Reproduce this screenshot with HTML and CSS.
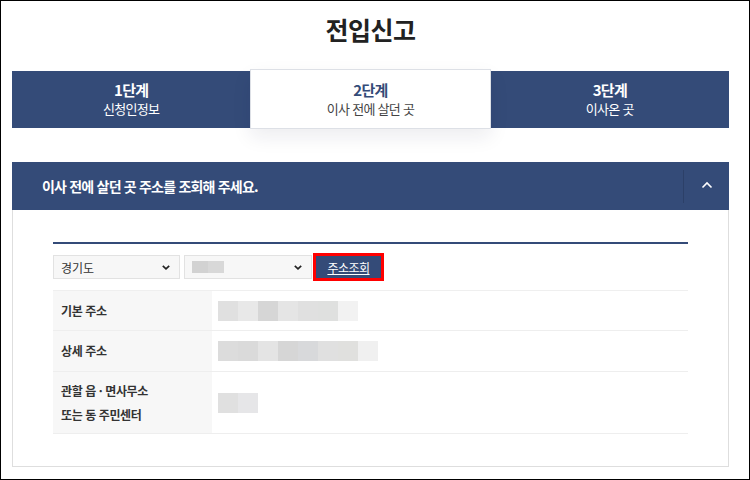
FILE: index.html
```html
<!DOCTYPE html>
<html lang="ko">
<head>
<meta charset="utf-8">
<link rel="stylesheet" href="styles.css">
</head>
<body>
<div class="frame">
  <h1 class="title">전입신고</h1>
  <div class="steps">
    <div class="step"><strong>1단계</strong><span>신청인정보</span></div>
    <div class="step active"><strong>2단계</strong><span>이사 전에 살던 곳</span></div>
    <div class="step"><strong>3단계</strong><span>이사온 곳</span></div>
  </div>
  <section class="panel">
    <div class="panel-head">
      <h2>이사 전에 살던 곳 주소를 조회해 주세요.</h2>
      <button class="toggle" type="button" aria-label="접기">
        <svg width="12" height="8" viewBox="0 0 12 8"><polyline points="1.5,6.5 6,2 10.5,6.5" fill="none" stroke="#fff" stroke-width="1.6"/></svg>
      </button>
    </div>
    <div class="panel-body">
      <div class="search">
        <div class="select"><span>경기도</span><svg class="caret" width="8" height="5" viewBox="0 0 8 5"><polyline points="0.8,0.8 4,3.8 7.2,0.8" fill="none" stroke="#222" stroke-width="1.7"/></svg></div>
        <div class="select"><span class="blur"><i class="g1"></i><i class="g2"></i></span><svg class="caret" width="8" height="5" viewBox="0 0 8 5"><polyline points="0.8,0.8 4,3.8 7.2,0.8" fill="none" stroke="#222" stroke-width="1.7"/></svg></div>
        <button class="search-btn" type="button">주소조회</button>
      </div>
      <div class="info">
        <div class="row">
          <div class="label">기본 주소</div>
          <div class="value"><span class="blur"><i class="a1"></i><i class="a2"></i><i class="a3"></i><i class="a4"></i><i class="a5"></i><i class="a6"></i><i class="a7"></i></span></div>
        </div>
        <div class="row">
          <div class="label">상세 주소</div>
          <div class="value"><span class="blur"><i class="b1"></i><i class="b2"></i><i class="b3"></i><i class="b4"></i><i class="b5"></i><i class="b6"></i><i class="b7"></i><i class="b8"></i></span></div>
        </div>
        <div class="row tall">
          <div class="label">관할 읍 · 면사무소<br>또는 동 주민센터</div>
          <div class="value"><span class="blur"><i class="c1"></i><i class="c2"></i></span></div>
        </div>
      </div>
    </div>
  </section>
</div>
</body>
</html>
```

FILE: styles.css
```css
* { box-sizing: border-box; }
html, body { margin: 0; padding: 0; background: #fff; }
body { font-family: "Noto Sans CJK KR", "Noto Sans", sans-serif; color: #333; }

.frame {
  width: 750px;
  height: 480px;
  border: 1px solid #000;
  padding: 0 20px 0 11px;
  overflow: hidden;
}

.title {
  margin: 0;
  padding-top: 11px;
  height: 68px;
  font-size: 25px;
  line-height: 34px;
  font-weight: 700;
  color: #222;
  text-align: center;
  letter-spacing: -0.5px;
}

.steps {
  display: flex;
  align-items: center;
  height: 60px;
}
.step {
  flex: 1;
  height: 57px;
  background: #344b78;
  color: #fff;
  display: flex;
  flex-direction: column;
  align-items: center;
  justify-content: center;
  letter-spacing: -0.7px;
}
.step strong { font-size: 15px; line-height: 20px; font-weight: 700; }
.step span { font-size: 13px; line-height: 18px; font-weight: 400; }
.step.active {
  height: 60px;
  background: #fff;
  color: #344b78;
  border: 1px solid #dde0e6;
  box-shadow: 0 8px 18px rgba(20, 30, 60, 0.08);
  position: relative;
  z-index: 1;
}
.step.active span { color: #444; }

.panel { margin-top: 33px; }
.panel-head {
  height: 48px;
  background: #344b78;
  display: flex;
  align-items: center;
  justify-content: space-between;
}
.panel-head h2 {
  margin: 0 0 0 30px;
  font-size: 14px;
  font-weight: 700;
  color: #fff;
  letter-spacing: -0.8px;
}
.toggle {
  width: 46px;
  height: 33px;
  border: 0;
  border-left: 1px solid #2c4068;
  background: transparent;
  display: flex;
  align-items: center;
  justify-content: center;
  padding: 0 0 2px 0;
}

.panel-body {
  height: 257px;
  border: 1px solid #dedede;
  border-top: 0;
  padding: 32px 40px 0 40px;
}

.search {
  border-top: 2px solid #344b78;
  padding-top: 10px;
  display: flex;
  align-items: center;
  gap: 4px;
  height: 38px;
}
.select {
  width: 127px;
  height: 24px;
  border: 1px solid #e2e2e2;
  background: #f7f7f7;
  display: flex;
  align-items: center;
  justify-content: space-between;
  padding: 0 9px 0 7px;
  font-size: 12px;
  color: #333;
}
.select + .select { width: 128px; }
.search-btn {
  margin-left: -3px;
  width: 71px;
  height: 28px;
  border: 3px solid #f00;
  background: #344b78;
  color: #fff;
  font-family: inherit;
  font-size: 12px;
  text-decoration: underline;
  padding: 0;
  letter-spacing: -0.5px;
}

.blur { display: flex; }
.blur i { display: block; width: 20px; height: 20px; }
.select .blur i { width: 16px; height: 12px; }
.g1 { background: #d2d2d2; }
.g2 { background: #d8d8d8; }

.info { margin-top: 10px; border-top: 1px solid #efefef; }
.row {
  display: flex;
  height: 41px;
  border-bottom: 1px solid #eeeeee;
}
.row:first-child { height: 40px; }
.row.tall { height: 62px; }
.label {
  width: 159px;
  background: #f7f7f7;
  padding-left: 8px;
  display: flex;
  align-items: center;
  font-size: 12px;
  font-weight: 700;
  color: #333;
  line-height: 24px;
  letter-spacing: -0.4px;
}
.value {
  flex: 1;
  display: flex;
  align-items: center;
  padding-left: 6px;
}
.a1 { background: #e0e0e0; } .a2 { background: #e8e8e8; } .a3 { background: #d6d6d6; }
.a4 { background: #e5e5e5; } .a5 { background: #e0e0e0; } .a6 { background: #dfe0df; } .a7 { background: #f2f2f2; }
.b1 { background: #dcdcdc; } .b2 { background: #dadada; } .b3 { background: #e4e4e4; } .b4 { background: #d6d6d6; }
.b5 { background: #d8d9db; } .b6 { background: #e0e0e0; } .b7 { background: #e0e0de; } .b8 { background: #f0f0f0; }
.c1 { background: #e0e0e0; } .c2 { background: #e6e6e8; }
```
